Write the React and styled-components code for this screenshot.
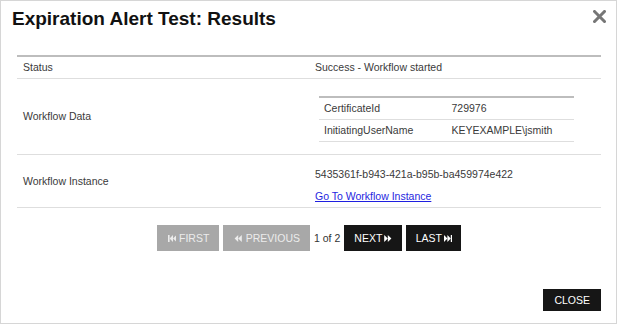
import React from "react";
import styled, { createGlobalStyle } from "styled-components";

const GlobalStyle = createGlobalStyle`
    html, body {
        margin: 0;
        padding: 0;
        background: #ffffff;
    }
    body {
        font-family: "Liberation Sans", Arial, sans-serif;
    }
`;

const workflowData = [
    { key: "CertificateId", value: "729976" },
    { key: "InitiatingUserName", value: "KEYEXAMPLE\\jsmith" },
];

// little media-control glyphs used on the pager buttons
const PagerIcon = ({ kind }) => {
    const shapes = {
        first: (
            <>
                <rect x="0" y="0" width="1.6" height="7" />
                <polygon points="1.6,3.5 5,0 5,7" />
                <polygon points="5,3.5 8.4,0 8.4,7" />
            </>
        ),
        prev: (
            <>
                <polygon points="0.6,3.5 4.2,0 4.2,7" />
                <polygon points="4.2,3.5 7.8,0 7.8,7" />
            </>
        ),
        next: (
            <>
                <polygon points="0.2,0 3.8,3.5 0.2,7" />
                <polygon points="3.8,0 7.4,3.5 3.8,7" />
            </>
        ),
        last: (
            <>
                <polygon points="0,0 3.4,3.5 0,7" />
                <polygon points="3.4,0 6.8,3.5 3.4,7" />
                <rect x="6.8" y="0" width="1.6" height="7" />
            </>
        ),
    };
    return (
        <svg width="8.4" height="7" viewBox="0 0 8.4 7" fill="currentColor">
            {shapes[kind]}
        </svg>
    );
};

const App = () => {
    return (
        <>
            <GlobalStyle />
            <Dialog>
                <Header>
                    <Title>Expiration Alert Test: Results</Title>
                    <CloseX aria-label="close">
                        <svg width="13" height="13" viewBox="0 0 13 13">
                            <path
                                d="M1.5 1.5 L11.5 11.5 M11.5 1.5 L1.5 11.5"
                                stroke="#767676"
                                strokeWidth="3"
                                strokeLinecap="square"
                            />
                        </svg>
                    </CloseX>
                </Header>

                <Results>
                    <Row>
                        <Cell>Status</Cell>
                        <Cell>Success - Workflow started</Cell>
                    </Row>
                    <Row>
                        <Cell $middle>Workflow Data</Cell>
                        <Cell>
                            <Nested>
                                {workflowData.map((item) => (
                                    <NestedRow key={item.key}>
                                        <NestedCell>{item.key}</NestedCell>
                                        <NestedCell>{item.value}</NestedCell>
                                    </NestedRow>
                                ))}
                            </Nested>
                        </Cell>
                    </Row>
                    <Row>
                        <Cell $middle>Workflow Instance</Cell>
                        <Cell>
                            <Guid>5435361f-b943-421a-b95b-ba459974e422</Guid>
                            <InstanceLink href="#">
                                Go To Workflow Instance
                            </InstanceLink>
                        </Cell>
                    </Row>
                </Results>

                <Pager>
                    <PageButton $disabled>
                        <PagerIcon kind="first" />
                        FIRST
                    </PageButton>
                    <PageButton $disabled>
                        <PagerIcon kind="prev" />
                        PREVIOUS
                    </PageButton>
                    <PageCount>1 of 2</PageCount>
                    <PageButton $trailing>
                        NEXT
                        <PagerIcon kind="next" />
                    </PageButton>
                    <PageButton $trailing>
                        LAST
                        <PagerIcon kind="last" />
                    </PageButton>
                </Pager>

                <Footer>
                    <CloseButton>CLOSE</CloseButton>
                </Footer>
            </Dialog>
        </>
    );
};

const Dialog = styled.div`
    width: 617px;
    height: 324px;
    box-sizing: border-box;
    border: 1px solid #d6d6d6;
    background: #ffffff;
    padding: 0 15px 0 16px;
    color: #3a3a3a;
    font-size: 10.5px;
    line-height: 13px;
`;

const Header = styled.div`
    display: flex;
    justify-content: space-between;
    align-items: flex-start;
    padding-top: 7px;
    margin-left: -5px;
    margin-right: -5px;
`;

const Title = styled.h1`
    margin: 0;
    font-size: 19px;
    line-height: 22px;
    font-weight: bold;
    color: #111111;
`;

const CloseX = styled.div`
    display: flex;
    padding-top: 2px;
    cursor: pointer;
`;

const Results = styled.div`
    margin-top: 25px;
    border-top: 2px solid #bdbdbd;
`;

const Row = styled.div`
    display: grid;
    grid-template-columns: 1fr 1fr;
    border-bottom: 1px solid #dedede;
`;

const Cell = styled.div`
    padding: 4px 6px;
    display: flex;
    flex-direction: column;
    justify-content: ${(p) => (p.$middle ? "center" : "flex-start")};
`;

const Nested = styled.div`
    margin: 13px 21px 8px 4px;
    border-top: 2px solid #bdbdbd;
`;

const NestedRow = styled.div`
    display: grid;
    grid-template-columns: 1fr 1fr;
    border-bottom: 1px solid #dedede;
`;

const NestedCell = styled.div`
    padding: 4px 5px;
`;

const Guid = styled.div`
    margin: 9px 0;
`;

const InstanceLink = styled.a`
    color: #1f1fe0;
    text-decoration: underline;
    align-self: flex-start;
`;

const Pager = styled.div`
    display: flex;
    justify-content: center;
    align-items: center;
    gap: 4px;
    margin-top: 17px;
`;

const PageButton = styled.button`
    display: flex;
    align-items: center;
    gap: ${(p) => (p.$trailing ? "2px" : "3px")};
    height: 26px;
    padding: ${(p) => (p.$trailing ? "0 9px 0 10px" : "0 10px 0 11px")};
    border: none;
    font-family: inherit;
    font-size: 10.5px;
    background: ${(p) => (p.$disabled ? "#a8a8a8" : "#161616")};
    color: ${(p) => (p.$disabled ? "#ececec" : "#ffffff")};
    cursor: ${(p) => (p.$disabled ? "default" : "pointer")};
`;

const PageCount = styled.span`
    color: #333333;
`;

const Footer = styled.div`
    display: flex;
    justify-content: flex-end;
    margin-top: 38px;
`;

const CloseButton = styled.button`
    height: 22px;
    padding: 0 11px;
    border: none;
    background: #161616;
    color: #ffffff;
    font-family: inherit;
    font-size: 10.5px;
    cursor: pointer;
`;

export default App;
